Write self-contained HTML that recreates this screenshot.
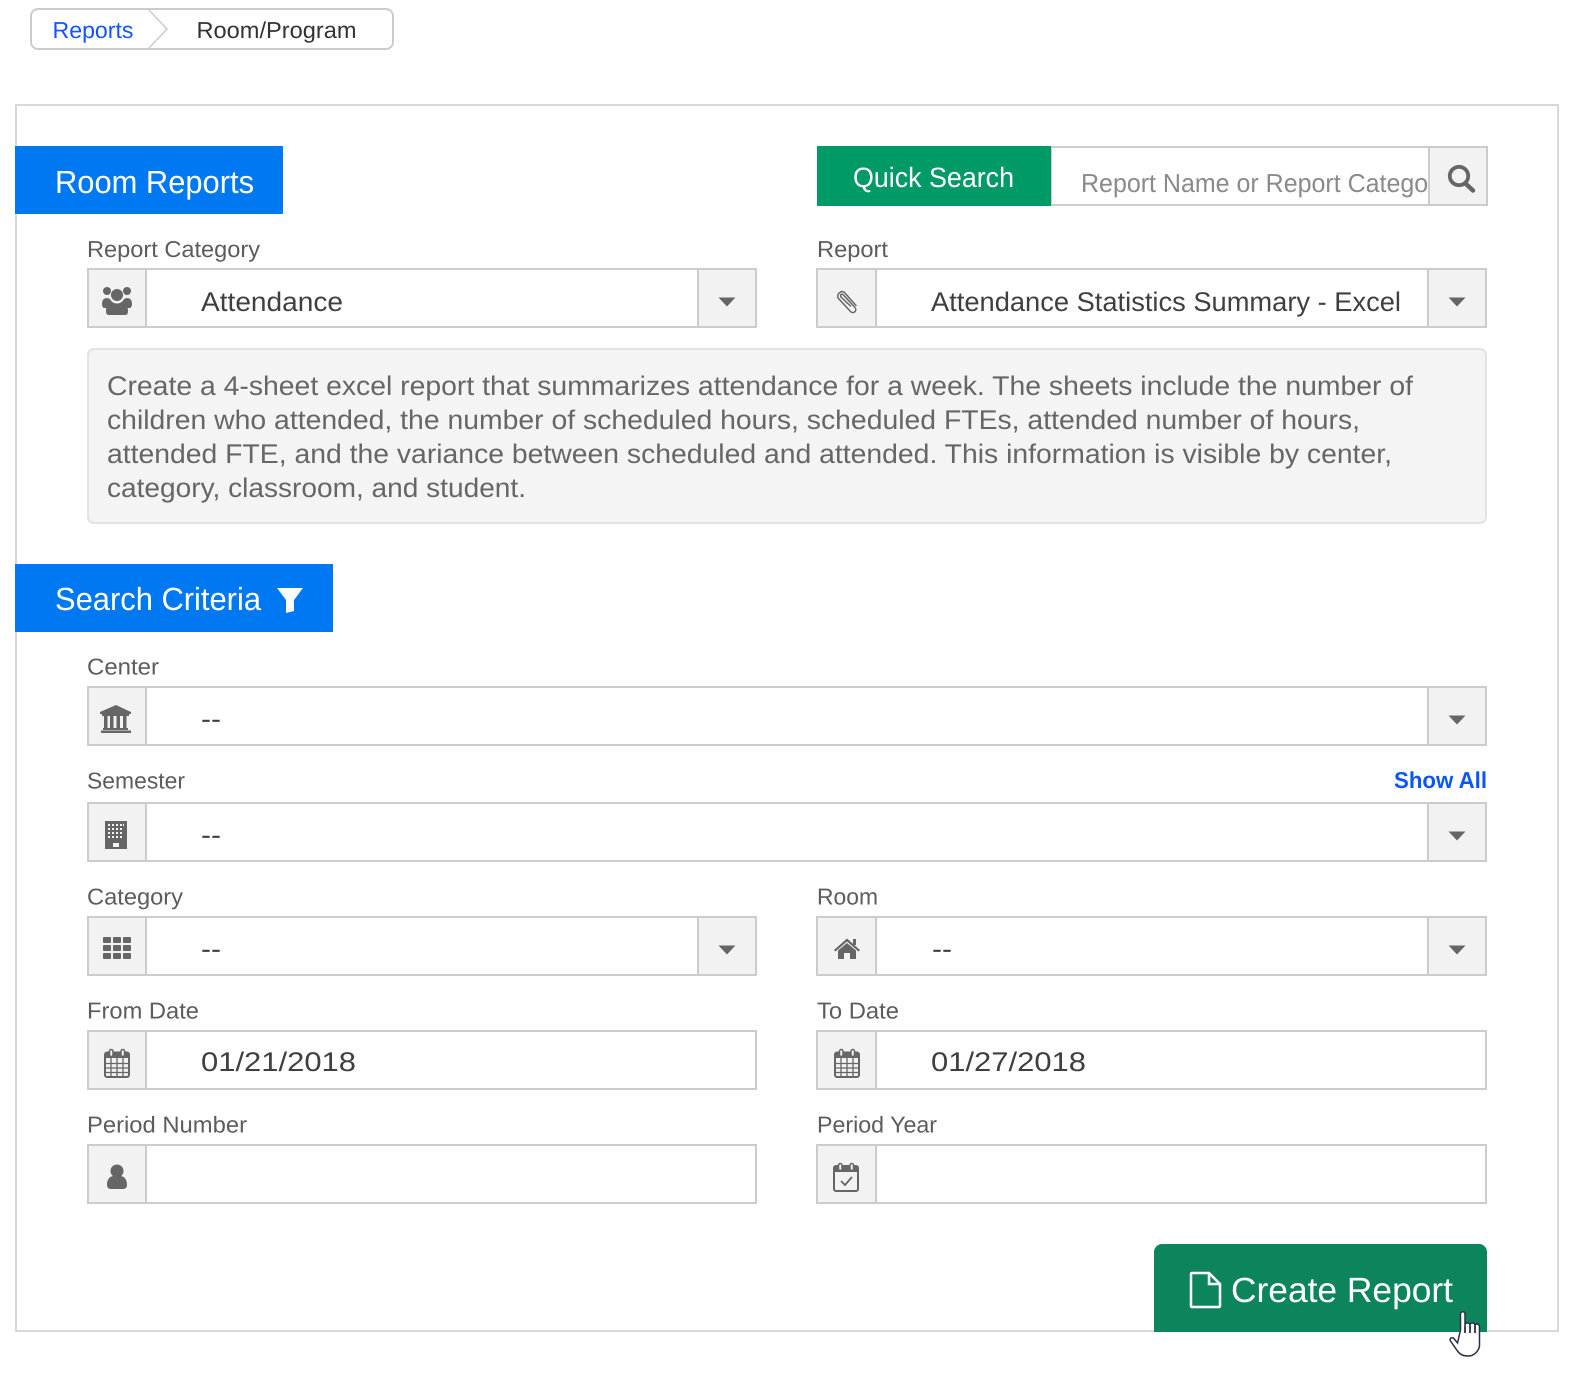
<!DOCTYPE html>
<html><head><meta charset="utf-8"><title>Room Reports</title>
<style>
html,body{margin:0;padding:0;background:#fff}
svg{display:block}
text{font-family:"Liberation Sans",sans-serif;text-rendering:geometricPrecision}
.l{font-size:23px;fill:#5c5c5c}
.v{font-size:27px;fill:#3f3f3f}
.d{font-size:27px;fill:#666}
.b{fill:#fff;stroke:#ccc;stroke-width:2}
.g{fill:#f2f2f2;stroke:#ccc;stroke-width:2}
.i{fill:#666}
</style></head><body>
<svg width="1581" height="1379" viewBox="0 0 1581 1379" xmlns="http://www.w3.org/2000/svg">
<defs><clipPath id="c"><rect x="1060" y="150" width="367" height="52"/></clipPath>
<g id="ar"><path d="M-8.5 -4.5H8.5L0 4.5Z" class="i"/></g>
<g id="cal"><path d="M1 5.5a2 2 0 0 1 2-2H23a2 2 0 0 1 2 2V26a2 2 0 0 1-2 2H3a2 2 0 0 1-2-2Z" fill="none" stroke="#666" stroke-width="2"/><rect x="1" y="4" width="24" height="5" class="i"/><rect x="5.500" y="0.500" width="3.500" height="7" rx="1.700" fill="#f2f2f2" stroke="#666" stroke-width="1.500"/><rect x="17" y="0.500" width="3.500" height="7" rx="1.700" fill="#f2f2f2" stroke="#666" stroke-width="1.500"/><path d="M2 14.500H24M2 19H24M2 23.500H24M7 9V27M13 9V27M19 9V27" stroke="#666" stroke-width="1.300" fill="none"/></g>
</defs>
<rect x="16" y="105" width="1542" height="1226" fill="#fff" stroke="#d8d8d8" stroke-width="2"/>

<!-- breadcrumb -->
<rect x="31" y="9" width="362" height="40" rx="7" fill="#fff" stroke="#ccc" stroke-width="2"/>
<path d="M148 9L167 29L148 49" fill="#fff" stroke="#ccc" stroke-width="1.500"/>
<text x="52.500" y="38" font-size="23" fill="#1155ff" textLength="81" lengthAdjust="spacingAndGlyphs">Reports</text>
<text x="196.500" y="38" font-size="23" fill="#333" textLength="160" lengthAdjust="spacingAndGlyphs">Room/Program</text>

<!-- room reports -->
<rect x="15" y="146" width="268" height="68" fill="#0078f2"/>
<text x="55" y="193" font-size="32" fill="#fff" textLength="199" lengthAdjust="spacingAndGlyphs">Room Reports</text>

<!-- quick search -->
<rect x="1051" y="147" width="378" height="58" fill="#fff" stroke="#ccc" stroke-width="2"/>
<rect x="817" y="146" width="234" height="60" fill="#009a66"/>
<text x="853" y="187" font-size="28" fill="#fff" textLength="161" lengthAdjust="spacingAndGlyphs">Quick Search</text>
<g clip-path="url(#c)"><text x="1081" y="192" font-size="26" fill="#8a8a8a" textLength="368" lengthAdjust="spacingAndGlyphs">Report Name or Report Category</text></g>
<rect x="1429" y="147" width="58" height="58" class="g"/>
<circle cx="1459" cy="176" r="9.200" fill="none" stroke="#666" stroke-width="3.800"/>
<path d="M1466 184L1473 190.500" stroke="#666" stroke-width="4.500" stroke-linecap="round"/>

<!-- report category -->
<text x="87" y="257" class="l" textLength="173" lengthAdjust="spacingAndGlyphs">Report Category</text>
<rect x="88" y="269" width="668" height="58" class="b"/>
<rect x="88" y="269" width="58" height="58" class="g"/>
<rect x="698" y="269" width="58" height="58" class="g"/>
<use href="#ar" x="727" y="302"/>
<g class="i">
<circle cx="107" cy="291" r="4"/><circle cx="127" cy="291" r="4"/><circle cx="117" cy="295" r="6"/>
<path d="M102 304c0-4 2-6 5-6l3 1c1 2 2 3 3 3l-2 1c-2 1-3 3-3 5h-4c-1 0-2-2-2-4Z"/>
<path d="M132 304c0-4-2-6-5-6l-3 1c-1 2-2 3-3 3l2 1c2 1 3 3 3 5h4c1 0 2-2 2-4Z"/>
<path d="M106 311c0-5 3-9 6-9 2 1 3 1.500 5 1.500s3-.5 5-1.500c3 0 6 4 6 9 0 3-1 4-3 4h-16c-2 0-3-1-3-4Z"/>
</g>
<text x="201" y="311" class="v" textLength="142" lengthAdjust="spacingAndGlyphs">Attendance</text>

<!-- report -->
<text x="817" y="257" class="l" textLength="71" lengthAdjust="spacingAndGlyphs">Report</text>
<rect x="817" y="269" width="669" height="58" class="b"/>
<rect x="817" y="269" width="59" height="58" class="g"/>
<rect x="1428" y="269" width="58" height="58" class="g"/>
<use href="#ar" x="1457" y="302"/>
<path d="M856 305.500L844.500 292.500c-3-3-9 2-6 6L850.500 311.500c3 3 7.500-1 4-4.500L843.500 295c-1.500-2-4 0-2.500 2L850.500 306" fill="none" stroke="#666" stroke-width="1.500" stroke-linecap="round"/>
<text x="931" y="311" class="v" textLength="470" lengthAdjust="spacingAndGlyphs">Attendance Statistics Summary - Excel</text>

<!-- description -->
<rect x="88" y="349" width="1398" height="174" rx="6" fill="#f4f4f4" stroke="#e3e3e3" stroke-width="2"/>
<text x="107" y="395" class="d" textLength="1306" lengthAdjust="spacingAndGlyphs">Create a 4-sheet excel report that summarizes attendance for a week. The sheets include the number of</text>
<text x="107" y="429" class="d" textLength="1253" lengthAdjust="spacingAndGlyphs">children who attended, the number of scheduled hours, scheduled FTEs, attended number of hours,</text>
<text x="107" y="463" class="d" textLength="1285" lengthAdjust="spacingAndGlyphs">attended FTE, and the variance between scheduled and attended. This information is visible by center,</text>
<text x="107" y="497" class="d" textLength="419" lengthAdjust="spacingAndGlyphs">category, classroom, and student.</text>

<!-- search criteria -->
<rect x="15" y="564" width="318" height="68" fill="#0078f2"/>
<text x="55" y="610" font-size="32" fill="#fff" textLength="206" lengthAdjust="spacingAndGlyphs">Search Criteria</text>
<path d="M277 588H303L294 600V611L286 613V600Z" fill="#fff"/>

<!-- center -->
<text x="87" y="674.500" class="l" textLength="72" lengthAdjust="spacingAndGlyphs">Center</text>
<rect x="88" y="687" width="1398" height="58" class="b"/>
<rect x="88" y="687" width="58" height="58" class="g"/>
<rect x="1428" y="687" width="58" height="58" class="g"/>
<use href="#ar" x="1457" y="720"/>
<g class="i"><path d="M116 705L131 712V714H100V712Z"/><rect x="102" y="714" width="27" height="2"/><path d="M104 716h3.500v12h-3.500zM110 716h3.500v12h-3.500zM116.500 716h3.500v12h-3.500zM123 716h3.500v12h-3.500z"/><rect x="103" y="728" width="25" height="2"/><rect x="101" y="730.500" width="30" height="2.500"/></g>
<text x="201" y="728" class="v" textLength="20" lengthAdjust="spacingAndGlyphs">--</text>

<!-- semester -->
<text x="87" y="788.500" class="l" textLength="98" lengthAdjust="spacingAndGlyphs">Semester</text>
<text x="1394" y="788" font-size="23" font-weight="bold" fill="#0b57f5" textLength="93" lengthAdjust="spacingAndGlyphs">Show All</text>
<rect x="88" y="803" width="1398" height="58" class="b"/>
<rect x="88" y="803" width="58" height="58" class="g"/>
<rect x="1428" y="803" width="58" height="58" class="g"/>
<use href="#ar" x="1457" y="836"/>
<rect x="105" y="821" width="22" height="28" class="i"/>
<g fill="#f2f2f2"><path d="M108 824h2v2h-2zM112 824h2v2h-2zM116 824h2v2h-2zM120 824h2v2h-2zM124 824h-1v2h1zM108 828h2v2h-2zM112 828h2v2h-2zM116 828h2v2h-2zM120 828h2v2h-2zM108 832h2v2h-2zM112 832h2v2h-2zM116 832h2v2h-2zM120 832h2v2h-2zM108 836h2v2h-2zM112 836h2v2h-2zM116 836h2v2h-2zM120 836h2v2h-2zM113 843h6v4h-6z"/></g>
<text x="201" y="844" class="v" textLength="20" lengthAdjust="spacingAndGlyphs">--</text>

<!-- category / room -->
<text x="87" y="904.500" class="l" textLength="96" lengthAdjust="spacingAndGlyphs">Category</text>
<rect x="88" y="917" width="668" height="58" class="b"/>
<rect x="88" y="917" width="58" height="58" class="g"/>
<rect x="698" y="917" width="58" height="58" class="g"/>
<use href="#ar" x="727" y="950"/>
<g class="i"><rect x="103" y="937" width="8" height="6" rx="1"/><rect x="113" y="937" width="8" height="6" rx="1"/><rect x="123" y="937" width="8" height="6" rx="1"/><rect x="103" y="945" width="8" height="6" rx="1"/><rect x="113" y="945" width="8" height="6" rx="1"/><rect x="123" y="945" width="8" height="6" rx="1"/><rect x="103" y="953" width="8" height="6" rx="1"/><rect x="113" y="953" width="8" height="6" rx="1"/><rect x="123" y="953" width="8" height="6" rx="1"/></g>
<text x="201" y="958" class="v" textLength="20" lengthAdjust="spacingAndGlyphs">--</text>

<text x="817" y="904.500" class="l" textLength="61" lengthAdjust="spacingAndGlyphs">Room</text>
<rect x="817" y="917" width="669" height="58" class="b"/>
<rect x="817" y="917" width="59" height="58" class="g"/>
<rect x="1428" y="917" width="58" height="58" class="g"/>
<use href="#ar" x="1457" y="950"/>
<g class="i"><path d="M834 950L847 938.500L860 950L858.500 951.500L847 941.500L835.500 951.500Z"/><path d="M838 950.500L847 943L856 950.500V959H850V953H844V959H838Z"/><rect x="853" y="939" width="3" height="6"/></g>
<text x="932" y="958" class="v" textLength="20" lengthAdjust="spacingAndGlyphs">--</text>

<!-- dates -->
<text x="87" y="1018.500" class="l" textLength="112" lengthAdjust="spacingAndGlyphs">From Date</text>
<rect x="88" y="1031" width="668" height="58" class="b"/>
<rect x="88" y="1031" width="58" height="58" class="g"/>
<use href="#cal" x="104" y="1049"/>
<text x="201" y="1071" class="v" textLength="155" lengthAdjust="spacingAndGlyphs">01/21/2018</text>

<text x="817" y="1018.500" class="l" textLength="82" lengthAdjust="spacingAndGlyphs">To Date</text>
<rect x="817" y="1031" width="669" height="58" class="b"/>
<rect x="817" y="1031" width="59" height="58" class="g"/>
<use href="#cal" x="834" y="1049"/>
<text x="931" y="1071" class="v" textLength="155" lengthAdjust="spacingAndGlyphs">01/27/2018</text>

<!-- period -->
<text x="87" y="1132.500" class="l" textLength="160" lengthAdjust="spacingAndGlyphs">Period Number</text>
<rect x="88" y="1145" width="668" height="58" class="b"/>
<rect x="88" y="1145" width="58" height="58" class="g"/>
<circle cx="117" cy="1171" r="6.500" class="i"/>
<path d="M107 1185c0-7 4-9 7-9 2 1 4 1 6 0 3 0 7 2 7 9 0 3-2 4-4 4h-12c-2 0-4-1-4-4Z" class="i"/>

<text x="817" y="1132.500" class="l" textLength="120" lengthAdjust="spacingAndGlyphs">Period Year</text>
<rect x="817" y="1145" width="669" height="58" class="b"/>
<rect x="817" y="1145" width="59" height="58" class="g"/>
<path d="M834 1168a2 2 0 0 1 2-2H856a2 2 0 0 1 2 2V1189a2 2 0 0 1-2 2H836a2 2 0 0 1-2-2Z" fill="none" stroke="#666" stroke-width="2"/>
<rect x="834" y="1167" width="24" height="5" class="i"/>
<rect x="838.500" y="1163.500" width="3.500" height="7" rx="1.700" fill="#f2f2f2" stroke="#666" stroke-width="1.500"/>
<rect x="850" y="1163.500" width="3.500" height="7" rx="1.700" fill="#f2f2f2" stroke="#666" stroke-width="1.500"/>
<path d="M841 1181L845 1185L852 1177" fill="none" stroke="#666" stroke-width="1.800"/>

<!-- create -->
<path d="M1154 1332V1252a8 8 0 0 1 8-8H1479a8 8 0 0 1 8 8V1332Z" fill="#0d855c"/>
<path d="M1192 1273H1209L1220 1284V1306a1 1 0 0 1-1 1H1192a1 1 0 0 1-1-1V1274a1 1 0 0 1 1-1ZM1209 1273V1284H1220" fill="none" stroke="#fff" stroke-width="2.500"/>
<text x="1231" y="1302" font-size="35" fill="#fff" textLength="222" lengthAdjust="spacingAndGlyphs">Create Report</text>

<!-- cursor -->
<path d="M1460.500 1330V1314c0-3 4.500-3 4.500 0V1326c0-2 .5-3 2.500-3s2.500 1 2.500 3c0-2 .5-3 2.500-3s2.500 1 2.500 3c0-1.500 1-2 2-2s2.500 1 2.500 3V1345c0 5-5 11-11 11c-5 0-8-1-11-5l-7-10c-1-2 0-4 3-3l4 5Z" fill="#fff" stroke="#2a2f45" stroke-width="1.500"/>
<path d="M1465 1326V1333M1470 1326V1333M1475 1326V1333" stroke="#2a2f45" stroke-width="1.800" fill="none"/>
</svg>
</body></html>
